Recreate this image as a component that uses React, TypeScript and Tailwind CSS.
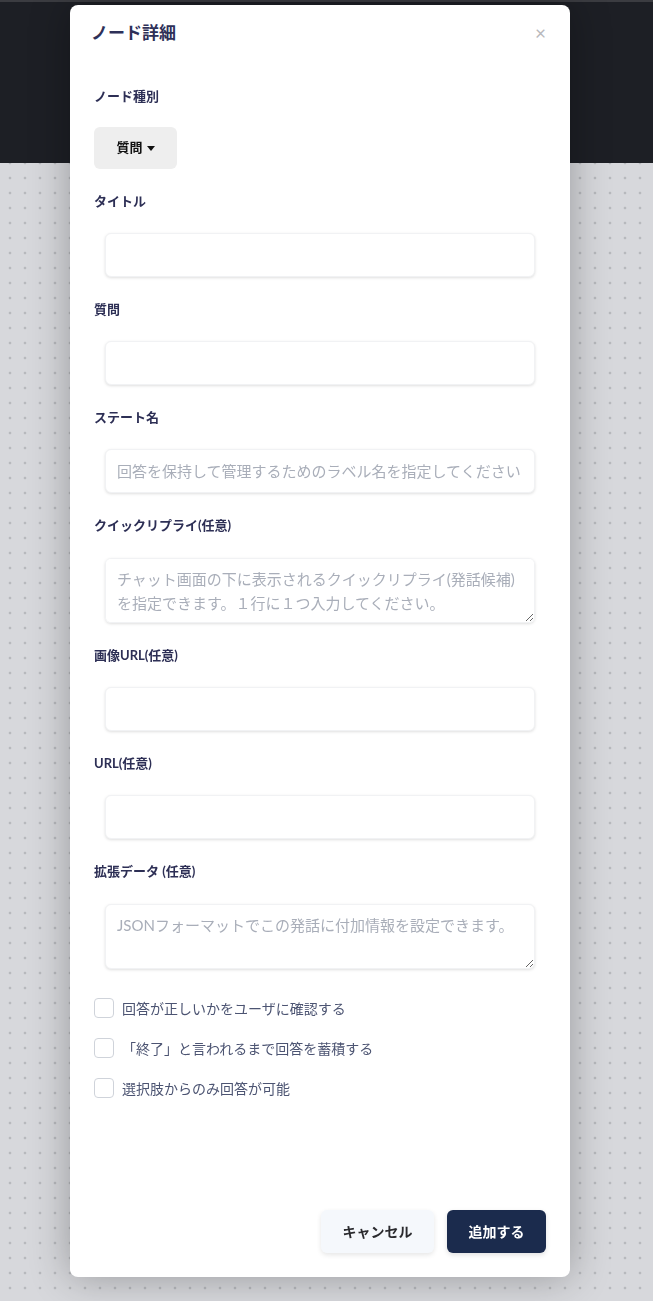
import React from "react";

const font = "font-['Lato','Noto_Sans_CJK_JP',sans-serif]";

function Label({ children }: { children: React.ReactNode }) {
  return (
    <label className="block text-[13px] font-bold leading-5 text-[#2d2f55]">
      {children}
    </label>
  );
}

const fieldClass =
  "mx-[11px] block w-[430px] rounded-md border border-[#f1f2f4] bg-white px-[11px] text-[15px] text-[#333] shadow-[0_1px_3px_rgba(0,0,0,0.13)] outline-none placeholder:text-[#a9aeb9]";

function Field({ label, placeholder }: { label: string; placeholder?: string }) {
  return (
    <div className="mb-[22px]">
      <Label>{label}</Label>
      <input type="text" placeholder={placeholder} className={`mt-[22px] h-[44px] ${fieldClass}`} />
    </div>
  );
}

function Area({ label, placeholder }: { label: string; placeholder: string }) {
  return (
    <div className="mb-[22px]">
      <Label>{label}</Label>
      <textarea
        placeholder={placeholder}
        className={`mt-[23px] h-[65px] py-[8px] leading-[24px] ${fieldClass}`}
      />
    </div>
  );
}

function Check({ label }: { label: string }) {
  return (
    <label className="flex h-5 items-center gap-2">
      <span className="h-5 w-5 rounded-[4px] border border-[#cfd3da] bg-white" />
      <span className="text-[14px] text-[#4c5472]">{label}</span>
    </label>
  );
}

export default function App() {
  return (
    <div className={`relative h-[1301px] w-full overflow-hidden bg-[#d7d8dc] ${font}`}>
      <div className="h-[163px] border-t-[2px] border-[#3b3c41] bg-[#1d1f25]" />
      <div className="h-[1138px] bg-[radial-gradient(circle,#8b8c92_0.8px,transparent_1.1px)] bg-[length:15px_15px] bg-[position:2.5px_-7.5px]" />

      <div className="absolute left-[70px] top-[5px] flex h-[1272px] w-[500px] flex-col rounded-lg bg-white shadow-[0_0_40px_rgba(0,0,0,0.3)]">
        <div className="flex items-center justify-between pl-[21px] pr-[24px] pt-[18px]">
          <h2 className="text-[17px] font-bold leading-5 text-[#2e3058]">ノード詳細</h2>
          <button className="text-[19px] leading-5 text-[#b8b8bc]">×</button>
        </div>

        <div className="px-6 pt-[43px]">
          <div className="mb-[22px]">
            <Label>ノード種別</Label>
            <button className="mt-[21px] flex h-[42px] w-[83px] items-center justify-center gap-1 rounded-md bg-[#eeeeee] text-[13px] font-bold text-[#111]">
              質問
              <span className="h-0 w-0 border-x-[4px] border-t-[5px] border-x-transparent border-t-[#111]" />
            </button>
          </div>
          <Field label="タイトル" />
          <Field label="質問" />
          <Field label="ステート名" placeholder="回答を保持して管理するためのラベル名を指定してください" />
          <Area
            label="クイックリプライ(任意)"
            placeholder={"チャット画面の下に表示されるクイックリプライ(発話候補)を指定できます。１行に１つ入力してください。"}
          />
          <Field label="画像URL(任意)" />
          <Field label="URL(任意)" />
          <Area label="拡張データ (任意)" placeholder="JSONフォーマットでこの発話に付加情報を設定できます。" />

          <div className="mt-[29px] flex flex-col gap-5">
            <Check label="回答が正しいかをユーザに確認する" />
            <Check label="「終了」と言われるまで回答を蓄積する" />
            <Check label="選択肢からのみ回答が可能" />
          </div>
        </div>

        <div className="mt-auto flex justify-end gap-[13px] px-6 pb-[24px]">
          <button className="h-[43px] w-[113px] rounded-md bg-[#f5f8fc] text-[14px] font-bold text-[#2a2a2e] shadow-[0_2px_5px_rgba(0,0,0,0.1)]">
            キャンセル
          </button>
          <button className="h-[43px] w-[99px] rounded-md bg-[#1b2b4d] text-[14px] font-bold text-white shadow-[0_2px_5px_rgba(0,0,0,0.12)]">
            追加する
          </button>
        </div>
      </div>
    </div>
  );
}
